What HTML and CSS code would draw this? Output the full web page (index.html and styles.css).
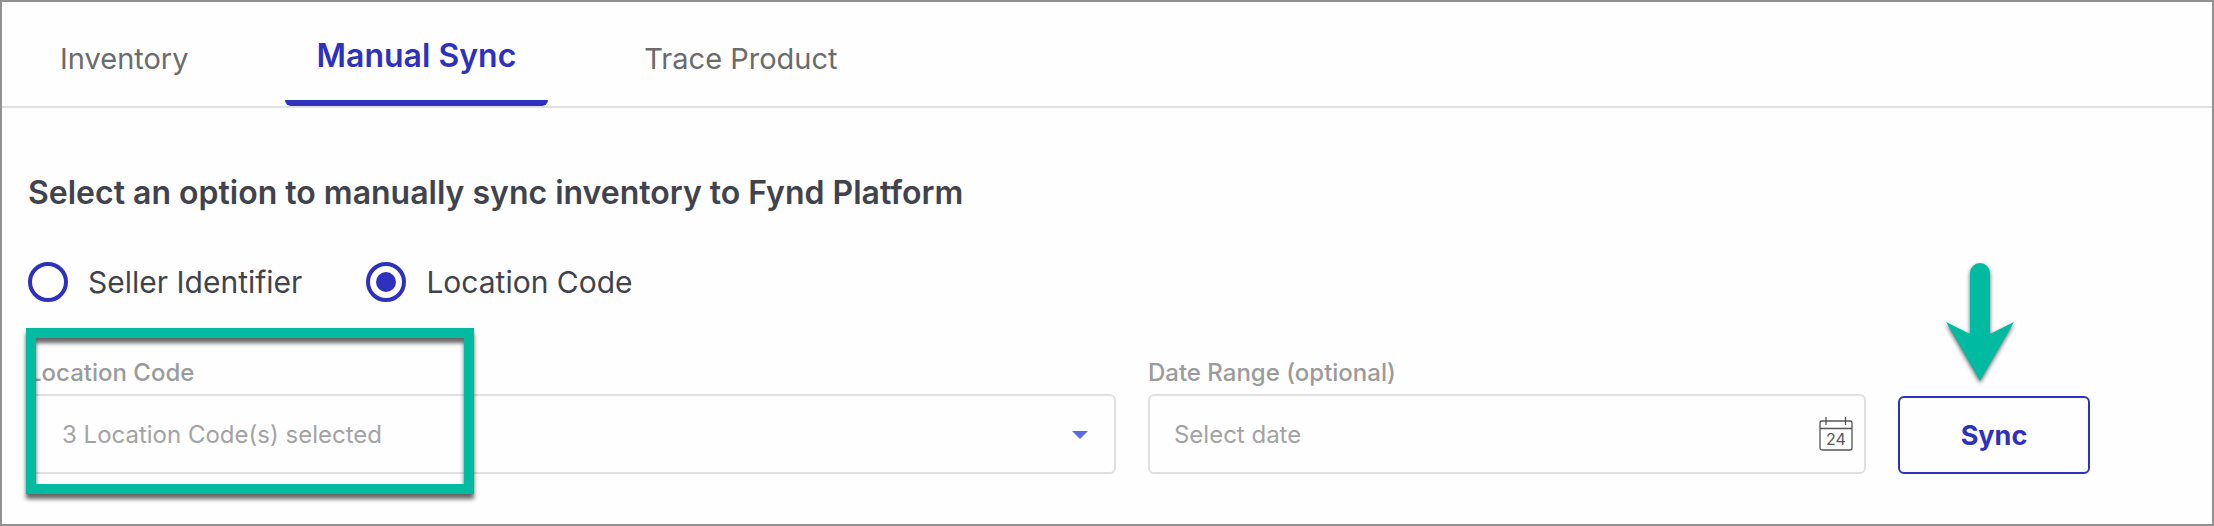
FILE: index.html
```
<!DOCTYPE html>
<html lang="en">
<head>
    <meta charset="UTF-8">
    <title>Manual Sync</title>
    <link rel="stylesheet" href="styles.css">
</head>
<body>
    <div class="page">
        <!-- tabs -->
        <nav class="tabs">
            <a class="tab" href="#inventory">Inventory</a>
            <a class="tab active" href="#manual-sync">Manual Sync</a>
            <a class="tab" href="#trace-product">Trace Product</a>
        </nav>

        <form class="sync">
            <h1 class="sync-title" id="syncTitle">Select an option to manually sync inventory to Fynd Platform</h1>

            <div class="options" role="radiogroup" aria-labelledby="syncTitle">
                <label class="option">
                    <input type="radio" name="option" value="seller">
                    Seller Identifier
                </label>
                <label class="option">
                    <input type="radio" name="option" value="location" checked>
                    Location Code
                </label>
            </div>

            <div class="fields">
                <div class="field">
                    <label for="locationCode">Location Code</label>
                    <div class="control">
                        <select class="box" id="locationCode">
                            <option>3 Location Code(s) selected</option>
                        </select>
                        <svg class="caret" width="16" height="8" viewBox="0 0 16 8">
                            <path d="M0 0h16L8 8z" fill="#5b6be0"/>
                        </svg>
                    </div>
                    <div class="highlight"></div>
                </div>

                <div class="field">
                    <label for="dateRange">Date Range (optional)</label>
                    <div class="control">
                        <input class="box" id="dateRange" type="text" placeholder="Select date">
                        <svg class="calendar" width="34" height="34" viewBox="0 0 34 34">
                            <rect x="1" y="4" width="32" height="29" rx="2" fill="none" stroke="#555" stroke-width="1.3"/>
                            <path d="M1 11.5h32M7 0v8M26.5 0v8" fill="none" stroke="#555" stroke-width="1.3"/>
                            <text x="17" y="28" text-anchor="middle">24</text>
                        </svg>
                    </div>
                </div>

                <div class="action">
                    <button class="sync-btn" type="button">Sync</button>
                    <svg class="arrow" width="68" height="118" viewBox="0 0 68 118">
                        <path d="M24 10a10 10 0 0 1 20 0v61l24-12-34 59L0 59l24 12z" fill="#00bba1"/>
                    </svg>
                </div>
            </div>
        </form>
    </div>
</body>
</html>
```
FILE: styles.css
```
*{
    box-sizing: border-box;
}

body{
    margin: 0;
    font-family: Inter, "Liberation Sans", sans-serif;
    background-color: #fefefe;
}

.page{
    min-height: 100vh;
    border: 2px solid #919191;
}

/* tabs */
.tabs{
    display: flex;
    align-items: flex-end;
    gap: 64px;
    padding: 34px 26px 0;
    border-bottom: 2px solid #e0e0e0;
}

.tab{
    padding: 0 32px 27px;
    font-size: 29px;
    line-height: 40px;
    color: #6b6b6b;
    text-decoration: none;
}

.tab.active{
    position: relative;
    padding-bottom: 30px;
    font-size: 32px;
    font-weight: 600;
    color: #2e31be;
}

/* bar under the active tab */
.tab.active::after{
    content: "";
    position: absolute;
    left: 0;
    right: 0;
    bottom: 0;
    height: 6px;
    border-radius: 0 0 6px 6px;
    background-color: #2e31be;
}

/* form */
.sync{
    padding: 65px 122px 50px 26px;
}

.sync-title{
    margin: 0 0 49px;
    font-size: 32px;
    font-weight: 600;
    line-height: 40px;
    color: #41434c;
}

.options{
    display: flex;
    gap: 64px;
    margin-bottom: 55px;
}

.option{
    display: flex;
    align-items: center;
    gap: 20px;
    font-size: 30px;
    line-height: 40px;
    color: #41434c;
}

.option input{
    appearance: none;
    width: 40px;
    height: 40px;
    margin: 0;
    padding: 6px;
    border: 4px solid #2e31be;
    border-radius: 50%;
}

/* the dot */
.option input:checked::before{
    content: "";
    display: block;
    width: 20px;
    height: 20px;
    border-radius: 50%;
    background-color: #2e31be;
}

.fields{
    display: grid;
    grid-template-columns: 50fr 33fr 192px;
    align-items: end;
    gap: 32px;
}

.field{
    position: relative;
}

.field label{
    display: block;
    margin-bottom: 5px;
    font-size: 24px;
    font-weight: 500;
    line-height: 32px;
    color: #9b9b9b;
}

.control{
    position: relative;
}

.box{
    appearance: none;
    display: block;
    width: 100%;
    height: 80px;
    padding: 0 64px 0 24px;
    border: 2px solid #e0e0e0;
    border-radius: 6px;
    background-color: transparent;
    font-family: inherit;
    font-size: 24px;
    color: #a3a3a3;
}

select.box{
    padding-left: 32px;
}

.box::placeholder{
    color: #a3a3a3;
    opacity: 1;
}

.caret{
    position: absolute;
    top: 37px;
    right: 28px;
    pointer-events: none;
}

.calendar{
    position: absolute;
    top: 23px;
    right: 13px;
    pointer-events: none;
}

.calendar text{
    font-size: 16px;
    fill: #555;
}

.action{
    position: relative;
}

.sync-btn{
    display: block;
    width: 100%;
    height: 78px;
    border: 2px solid #2e31be;
    border-radius: 6px;
    background-color: transparent;
    font-family: inherit;
    font-size: 27px;
    font-weight: 700;
    color: #2e31be;
}

/* green marks over the form */
.highlight{
    position: absolute;
    top: -29px;
    bottom: -20px;
    left: -2px;
    width: 448px;
    border: 10px solid #00bba1;
    filter: drop-shadow(0 5px 2px rgba(0, 0, 0, .6));
    pointer-events: none;
}

.arrow{
    position: absolute;
    left: 48px;
    bottom: calc(100% + 15px);
    overflow: visible;
    filter: drop-shadow(0 2px 2px rgba(0, 0, 0, .6));
}
```
